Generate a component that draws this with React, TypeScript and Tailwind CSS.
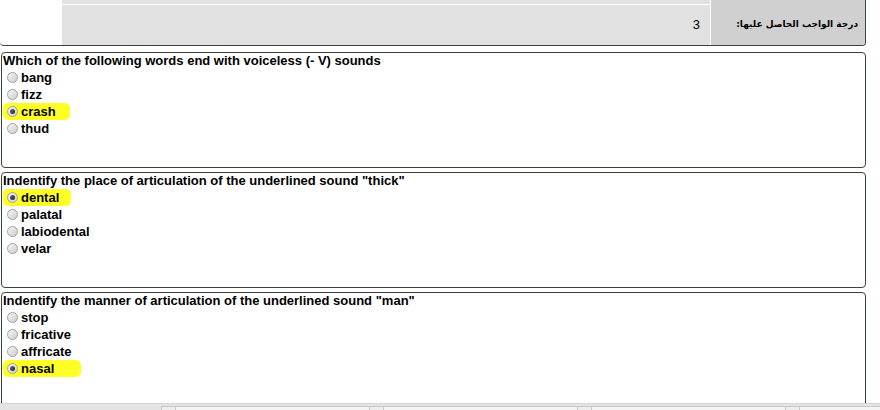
import React from 'react';

type Question = {
  title: string;
  options: string[];
  picked: string;
  mark: string;
};

const questions: Question[] = [
  {
    title: 'Which of the following words end with voiceless (- V) sounds',
    options: ['bang', 'fizz', 'crash', 'thud'],
    picked: 'crash',
    mark: 'w-[67px]',
  },
  {
    title: 'Indentify the place of articulation of the underlined sound "thick"',
    options: ['dental', 'palatal', 'labiodental', 'velar'],
    picked: 'dental',
    mark: 'w-[68px]',
  },
  {
    title: 'Indentify the manner of articulation of the underlined sound "man"',
    options: ['stop', 'fricative', 'affricate', 'nasal'],
    picked: 'nasal',
    mark: 'w-[78px]',
  },
];

const Radio: React.FC<{ checked: boolean }> = ({ checked }) => (
  <span className="w-[11px] h-[11px] rounded-full border border-[#a3a3a3] bg-gradient-to-br from-[#f6f6f6] to-[#cdcdcd] flex items-center justify-center shrink-0">
    {checked && <span className="w-[5px] h-[5px] rounded-full bg-gradient-to-br from-[#6b6b6b] to-[#262626]" />}
  </span>
);

const QuestionBox: React.FC<{ q: Question }> = ({ q }) => (
  <div className="w-[865px] h-[116px] ml-[1px] border border-[#39463a] rounded-[4px] px-[1px] shrink-0">
    <div className="h-[17px] leading-[16px]">{q.title}</div>
    {q.options.map((opt) => {
      const on = opt === q.picked;
      return (
        <div key={opt} className="h-[17px] leading-[17px] -mt-[1px] mb-[1px]">
          <div
            className={`flex items-center gap-[3px] pl-[4px] h-[17px] ${
              on ? `bg-[#ffff26] rounded-[5px] ${q.mark}` : ''
            }`}
          >
            <Radio checked={on} />
            <span>{opt}</span>
          </div>
        </div>
      );
    })}
  </div>
);

const App: React.FC = () => {
  return (
    <div className="relative w-[880px] h-[410px] overflow-hidden bg-white text-black font-['Liberation_Sans',Arial,sans-serif] text-[13px] font-bold">
      <div className="flex flex-col gap-[6px]">
        {/* grade summary row */}
        <div className="w-[866px] h-[46px] flex border-b border-r border-[#39463a] rounded-b-[4px] overflow-hidden">
          <div className="w-[62px] shrink-0" />
          <div className="flex-1 flex flex-col gap-[1px]">
            <div className="h-[4px] bg-[#e1e1e1]" />
            <div className="flex-1 bg-[#e1e1e1] flex items-center justify-end pr-[10px] font-normal text-[13px]">
              3
            </div>
          </div>
          <div className="w-[1px] bg-white" />
          <div
            dir="rtl"
            className="w-[154px] shrink-0 bg-[#d0d0d0] flex items-center pr-[7px] pt-[4px] font-['DejaVu_Sans',sans-serif] font-bold text-[9px]"
          >
            درجة الواجب الحاصل عليها:
          </div>
        </div>

        <div className="flex flex-col gap-[4px]">
          {questions.map((q) => (
            <QuestionBox key={q.title} q={q} />
          ))}
        </div>
      </div>

      {/* browser status strip at the bottom */}
      <div className="absolute left-0 bottom-0 w-full h-[7px] bg-[#e4e4e4] border-t border-[#d6d6d6] flex items-end pl-[161px]">
        {[0, 1, 2, 3].map((i) => (
          <div key={i} className="flex h-[4px] w-[208px] shrink-0">
            <div className="w-[14px] border-t border-l border-[#c8c8c8] bg-[#ededed]" />
            <div className="flex-1 border-t border-l border-[#c8c8c8] bg-[#f4f4f4]" />
          </div>
        ))}
      </div>
    </div>
  );
};

export default App;
